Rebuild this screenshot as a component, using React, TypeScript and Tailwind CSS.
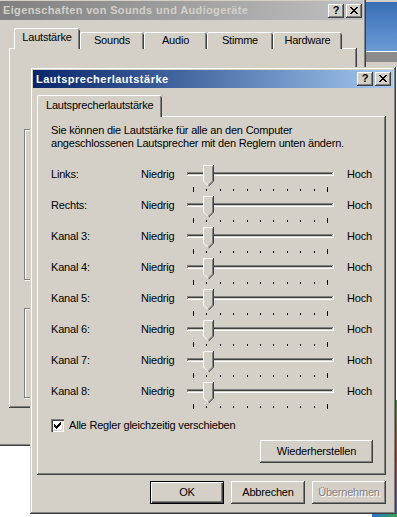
import React from 'react'

const FONT = "font-['Liberation_Sans',Arial,sans-serif]"

// classic 3d edges
const frame =
  'shadow-[inset_-1px_-1px_0_#404040,inset_1px_1px_0_#d4d0c8,inset_-2px_-2px_0_#808080,inset_2px_2px_0_#ffffff]'
const raised =
  'shadow-[inset_-1px_-1px_0_#404040,inset_1px_1px_0_#ffffff,inset_-2px_-2px_0_#808080,inset_2px_2px_0_#d4d0c8]'
const panelEdge =
  'shadow-[inset_-1px_-1px_0_#404040,inset_1px_1px_0_#ffffff,inset_-2px_-2px_0_#808080]'
const tabEdge =
  'shadow-[inset_1px_0_0_#ffffff,inset_0_1px_0_#ffffff,inset_-1px_0_0_#404040,inset_-2px_0_0_#808080]'

const channels = ['Links:', 'Rechts:', 'Kanal 3:', 'Kanal 4:', 'Kanal 5:', 'Kanal 6:', 'Kanal 7:', 'Kanal 8:']

function CaptionButton({ kind }: { kind: 'help' | 'close' }) {
  return (
    <div className={`w-4 h-[14px] bg-[#d4d0c8] ${raised} flex items-center justify-center`}>
      {kind === 'help' ? (
        <span className="text-[11px] font-bold leading-none text-black pb-px tracking-normal">?</span>
      ) : (
        <svg width="8" height="7" viewBox="0 0 8 7" className="mb-px">
          <path
            d="M0 0h2v1h-2zM6 0h2v1h-2zM1 1h2v1h-2zM5 1h2v1h-2zM2 2h4v1h-4zM3 3h2v1h-2zM2 4h4v1h-4zM1 5h2v1h-2zM5 5h2v1h-2zM0 6h2v1h-2zM6 6h2v1h-2z"
            fill="#000"
          />
        </svg>
      )}
    </div>
  )
}

function Slider() {
  const ticks = Array.from({ length: 11 }, (_, i) => 6 + Math.round(i * 13.4))
  return (
    <svg width="148" height="31" viewBox="0 0 148 31" overflow="visible" className="block">
      <rect x="0" y="13" width="147" height="4" fill="#d4d0c8" />
      <path d="M0 13.5H146M0.5 13V16" stroke="#808080" />
      <path d="M1 14.5H145" stroke="#404040" />
      <path d="M0 16.5H147M146.5 13V17" stroke="#ffffff" />
      {ticks.map((x, i) => {
        const end = i === 0 || i === ticks.length - 1
        return <rect key={x} x={x} y={end ? 28 : 30} width="1" height={end ? 5 : 2} fill="#000" />
      })}
      <polygon points="16,6 27,6 27,22 21.5,27.5 16,22" fill="#d4d0c8" />
      <path d="M21 26.5L16.5 22V6.5H26" stroke="#ffffff" fill="none" />
      <path d="M25.5 7.5V22L21.5 26" stroke="#808080" fill="none" />
      <path d="M26.5 6V22.2L21.5 27.2" stroke="#404040" fill="none" />
    </svg>
  )
}

function Checkbox() {
  return (
    <div className="w-[13px] h-[13px] bg-white shadow-[inset_1px_1px_0_#808080,inset_2px_2px_0_#404040,inset_-1px_-1px_0_#ffffff,inset_-2px_-2px_0_#d4d0c8] flex items-center justify-center">
      <svg width="7" height="7" viewBox="0 0 7 7">
        <path
          d="M0 2h1v3h-1zM1 3h1v3h-1zM2 4h1v3h-1zM3 3h1v3h-1zM4 2h1v3h-1zM5 1h1v3h-1zM6 0h1v3h-1z"
          fill="#000"
        />
      </svg>
    </div>
  )
}

function Button({
  label,
  width = 'w-[74px]',
  isDefault,
  disabled,
}: {
  label: string
  width?: string
  isDefault?: boolean
  disabled?: boolean
}) {
  const edge = isDefault
    ? 'border border-black shadow-[inset_1px_1px_0_#ffffff,inset_-1px_-1px_0_#404040,inset_-2px_-2px_0_#808080]'
    : raised
  return (
    <div className={`${width} h-[23px] bg-[#d4d0c8] ${edge} flex items-center justify-center`}>
      <span
        className={
          disabled ? 'text-[#808080] [text-shadow:1px_1px_0_#ffffff]' : 'text-black'
        }
      >
        {label}
      </span>
    </div>
  )
}

function BackWindow() {
  const tabs = [
    { label: 'Lautstärke', w: 'w-[66px]', active: true },
    { label: 'Sounds', w: 'w-[64px]' },
    { label: 'Audio', w: 'w-[63px]' },
    { label: 'Stimme', w: 'w-[66px]' },
    { label: 'Hardware', w: 'w-[69px]' },
  ]
  return (
    <div className={`absolute left-[-3px] top-[-2px] w-[369px] h-[448px] bg-[#d4d0c8] ${frame} p-[3px]`}>
      <div className="h-[19px] bg-linear-to-r from-[#808080] to-[#c0c0c0] flex items-center justify-between pl-[3px] pr-[1px]">
        <span className="text-[#d4d0c8] font-bold text-[11px] tracking-[0.35px]">
          Eigenschaften von Sounds und Audiogeräte
        </span>
        <div className="flex gap-[2px]">
          <CaptionButton kind="help" />
          <CaptionButton kind="close" />
        </div>
      </div>
      <div className="pt-[8px] pl-[9px]">
        <div className="flex items-end ml-[5px]">
          {tabs.map((t) => (
            <div
              key={t.label}
              className={`${t.w} ${t.active ? 'h-[21px] pb-[3px] relative z-10' : 'h-[17px]'} -mb-px bg-[#d4d0c8] ${tabEdge} rounded-t-[2px] flex items-center justify-center`}
            >
              {t.label}
            </div>
          ))}
        </div>
        <div className={`w-[348px] h-[360px] ${panelEdge} pl-[15px] pt-[81px] flex flex-col gap-[28px]`}>
          <div className="w-[320px] h-[151px] border border-[#808080] shadow-[inset_1px_1px_0_#ffffff,1px_1px_0_#ffffff]" />
          <div className="w-[320px] h-[90px] border border-[#808080] shadow-[inset_1px_1px_0_#ffffff,1px_1px_0_#ffffff]" />
        </div>
      </div>
    </div>
  )
}

function VolumeDialog() {
  return (
    <div className={`absolute left-[30px] top-[67px] w-[366px] h-[447px] bg-[#d4d0c8] ${frame} p-[3px] flex flex-col`}>
      <div className="h-[18px] bg-linear-to-r from-[#0a246a] to-[#a6caf0] flex items-center justify-between pl-[3px] pr-[2px]">
        <span className="text-white font-bold text-[11px] tracking-[0.5px]">Lautsprecherlautstärke</span>
        <div className="flex gap-[2px]">
          <CaptionButton kind="help" />
          <CaptionButton kind="close" />
        </div>
      </div>

      <div className="pt-[7px] pl-[4px]">
        <div className="flex">
          <div
            className={`w-[125px] h-[22px] -mb-px pb-px relative z-10 bg-[#d4d0c8] ${tabEdge} rounded-t-[2px] flex items-center pl-[9px]`}
          >
            Lautsprecherlautstärke
          </div>
        </div>

        <div className={`w-[349px] h-[359px] ${panelEdge} pl-[14px] pr-[13px] pt-[8px] flex flex-col`}>
          <p className="leading-[13px]">
            Sie können die Lautstärke für alle an den Computer
            <br />
            angeschlossenen Lautsprecher mit den Reglern unten ändern.
          </p>

          <div className="mt-[9px] flex flex-col">
            {channels.map((c) => (
              <div key={c} className="h-[31px] grid grid-cols-[90px_46px_148px_1fr] items-center">
                <span>{c}</span>
                <span>Niedrig</span>
                <Slider />
                <span className="pl-[12px]">Hoch</span>
              </div>
            ))}
          </div>

          <div className="mt-[12px] flex items-center gap-[5px] h-[13px]">
            <Checkbox />
            <span>Alle Regler gleichzeitig verschieben</span>
          </div>

          <div className="mt-[8px] flex justify-end">
            <Button label="Wiederherstellen" width="w-[113px]" />
          </div>
        </div>

        <div className="mt-[6px] w-[349px] flex justify-end gap-[7px]">
          <Button label="OK" isDefault />
          <Button label="Abbrechen" />
          <Button label="Übernehmen" disabled />
        </div>
      </div>
    </div>
  )
}

export default function App() {
  return (
    <div
      className={`relative w-[397px] h-[517px] overflow-hidden bg-white text-[11px] tracking-[-0.2px] text-black ${FONT}`}
    >
      {/* window behind, right of the sound properties */}
      <div className="absolute left-[366px] top-0 w-[31px] h-[67px] bg-[#d4d0c8] flex flex-col">
        <div className="h-[2px] bg-[#d4d0c8]" />
        <div className="h-[49px] bg-linear-to-b from-[#3a6fb5] to-[#6b9bd6]" />
        <div className="h-px bg-white" />
        <div className="h-[10px] bg-[#8c8c8c]" />
      </div>
      <div className="absolute left-[394px] top-[400px] w-[3px] h-[117px] bg-linear-to-b from-[#3b8f3b] via-[#b03a2e] to-[#2f5fb3]" />
      <div className="absolute left-[372px] top-[514px] w-[25px] h-[3px] bg-linear-to-r from-[#2f6fd0] to-[#3fa04a]" />

      <BackWindow />
      <VolumeDialog />
    </div>
  )
}
